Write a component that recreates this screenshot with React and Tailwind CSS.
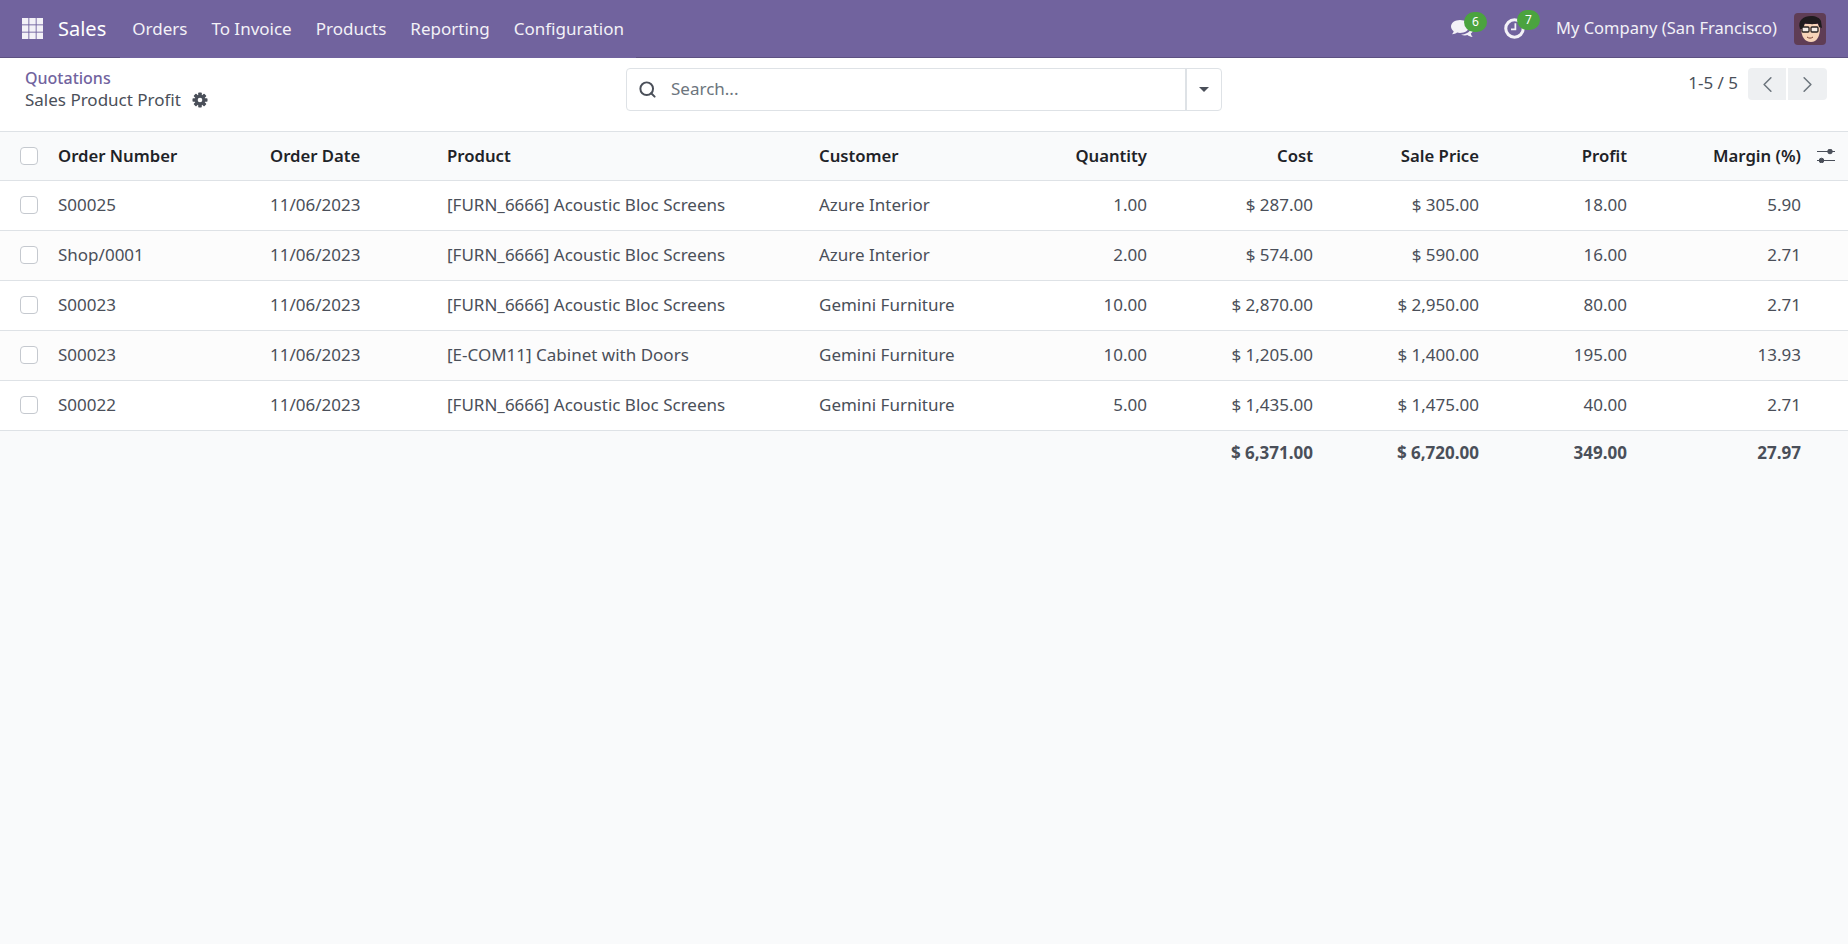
import React from 'react';
import { Search, ChevronLeft, ChevronRight } from 'lucide-react';

const menus = ['Orders', 'To Invoice', 'Products', 'Reporting', 'Configuration'];

const rows = [
  ['S00025', '11/06/2023', '[FURN_6666] Acoustic Bloc Screens', 'Azure Interior', '1.00', '$ 287.00', '$ 305.00', '18.00', '5.90'],
  ['Shop/0001', '11/06/2023', '[FURN_6666] Acoustic Bloc Screens', 'Azure Interior', '2.00', '$ 574.00', '$ 590.00', '16.00', '2.71'],
  ['S00023', '11/06/2023', '[FURN_6666] Acoustic Bloc Screens', 'Gemini Furniture', '10.00', '$ 2,870.00', '$ 2,950.00', '80.00', '2.71'],
  ['S00023', '11/06/2023', '[E-COM11] Cabinet with Doors', 'Gemini Furniture', '10.00', '$ 1,205.00', '$ 1,400.00', '195.00', '13.93'],
  ['S00022', '11/06/2023', '[FURN_6666] Acoustic Bloc Screens', 'Gemini Furniture', '5.00', '$ 1,435.00', '$ 1,475.00', '40.00', '2.71'],
];

function Box() {
  return <span className="block h-[18px] w-[18px] rounded-[4px] border border-[#c5c9cf] bg-white" />;
}

function Avatar() {
  return (
    <svg viewBox="0 0 32 32" className="h-8 w-8 rounded-[4px]">
      <rect width="32" height="32" fill="#5f3d55" />
      <path d="M7 14c0 10 4 15 10 15s9-6 9-14l-2-4H10z" fill="#f6d3b8" />
      <path d="M6 16C3 7 10 3 17 3c5 0 9 2 10 5l1 7-3-1-1-4c-4 2-10 1-13 0l-2 6z" fill="#1f1b1e" />
      <rect x="8" y="14" width="7" height="5" rx="1" fill="#f3ece6" stroke="#26201f" strokeWidth="1.3" />
      <rect x="17" y="14" width="7" height="5" rx="1" fill="#f3ece6" stroke="#26201f" strokeWidth="1.3" />
      <path d="M13 24c2 1.500 4 1.500 6 0" stroke="#7a4335" strokeWidth="1" fill="none" />
    </svg>
  );
}

function Gear() {
  return (
    <svg viewBox="0 0 16 16" className="h-4 w-4">
      {[0, 45, 90, 135].map((a) => (
        <rect key={a} x="6.200" y="0.500" width="3.600" height="15" rx="0.800" fill="#4a4f59" transform={`rotate(${a} 8 8)`} />
      ))}
      <circle cx="8" cy="8" r="5.200" fill="#4a4f59" />
      <circle cx="8" cy="8" r="2.300" fill="#ffffff" />
    </svg>
  );
}

function Navbar() {
  return (
    <div className="relative flex h-[58px] items-center bg-[#71639e] text-white border-b border-[#5d5182]">
      <span className="absolute -bottom-px left-[120px] h-px w-[516px] bg-[#71639e]" />
      <svg viewBox="0 0 21 21" className="ml-[22px] h-[21px] w-[21px]" fill="#f3f1f7">
        {[0, 7.300, 14.600].map((y) =>
          [0, 7.300, 14.600].map((x) => <rect key={`${x}-${y}`} x={x} y={y} width="6.400" height="6.400" />)
        )}
      </svg>
      <span className="ml-[15px] text-[20px]">Sales</span>
      <div className="ml-[26px] flex gap-[24px] text-[17px] text-[#f3f1f7]">
        {menus.map((m) => (
          <span key={m}>{m}</span>
        ))}
      </div>
      <div className="ml-auto flex items-center">
        <span className="relative mr-[31px] flex">
          <svg viewBox="0 0 22 18" className="h-[18px] w-[22px]" fill="#f3f1f7">
            <path d="M9 0c5 0 9 2.800 9 6.500S14 13 9 13c-1 0-2-.1-2.900-.4C4.800 13.600 3 14.300 1 14.300c1-1 1.500-2 1.700-3C1 10 0 8.400 0 6.500 0 2.800 4 0 9 0z" />
            <path d="M19.500 5.500C21 6.700 22 8 22 9.700c0 1.500-.8 2.900-2.200 3.900.2 1 .8 2.400 1.800 3.400-2 0-3.900-.8-5.200-1.900-.8.2-1.500.3-2.400.3-1.500 0-2.900-.3-4-.9 5.500-.1 10-2.900 10-7.300 0-.6-.2-1.200-.5-1.700z" />
          </svg>
          <span className="absolute -right-[14px] -top-[8px] flex h-[20px] w-[23px] items-center justify-center rounded-full bg-[#4ba33f] text-[12px]">6</span>
        </span>
        <span className="relative mr-[31px] flex">
          <svg viewBox="0 0 24 24" className="h-[21px] w-[21px]" fill="none" stroke="#f3f1f7" strokeWidth="3.500">
            <circle cx="12" cy="12" r="10" />
            <path d="M13 6v7H8" strokeWidth="2" />
          </svg>
          <span className="absolute -right-[15px] -top-[8px] flex h-[20px] w-[23px] items-center justify-center rounded-full bg-[#4ba33f] text-[12px]">7</span>
        </span>
        <span className="text-[16.500px] text-[#f3f1f7]">My Company (San Francisco)</span>
        <span className="ml-[17px] mr-[22px] flex"><Avatar /></span>
      </div>
    </div>
  );
}

function ControlPanel() {
  return (
    <div className="relative flex h-[74px] items-start bg-white border-b border-[#dee2e6] text-[17px] text-[#4a4f59]">
      <div className="ml-[25px] mt-[9px] w-[601px] leading-[22px]">
        <div className="text-[16px] font-medium text-[#71639e]">Quotations</div>
        <div className="flex items-center gap-[11px]">
          Sales Product Profit
          <Gear />
        </div>
      </div>
      <div className="mt-[10px] flex h-[43px] w-[596px] items-center rounded-[4px] border border-[#dee2e6]">
        <Search size={19} strokeWidth={2.5} className="ml-[11px]" />
        <span className="-mt-[2px] ml-[14px] flex-1 text-[#6c757d]">Search...</span>
        <span className="flex h-full w-[36px] items-center justify-center border-l-2 border-[#dee2e6]">
          <span className="h-0 w-0 border-x-[5px] border-t-[5px] border-x-transparent border-t-[#4a4f59]" />
        </span>
      </div>
      <div className="ml-auto mr-[21px] mt-[10px] flex items-center">
        <span className="-mt-[2px] mr-[10px]">1-5 / 5</span>
        <span className="flex h-[32px] w-[38px] items-center justify-center rounded-l-[4px] bg-[#eef0f2] text-[#6c757d]"><ChevronLeft size={27} strokeWidth={1.4} /></span>
        <span className="ml-[2px] flex h-[32px] w-[39px] items-center justify-center rounded-r-[4px] bg-[#eef0f2] text-[#6c757d]"><ChevronRight size={27} strokeWidth={1.4} /></span>
      </div>
    </div>
  );
}

function ListTable() {
  return (
    <table className="w-full table-fixed border-collapse text-[17px] text-[#4a4f59]">
      <colgroup>
        <col className="w-[50px]" />
        <col className="w-[212px]" />
        <col className="w-[177px]" />
        <col className="w-[372px]" />
        <col className="w-[189px]" />
        <col className="w-[155px]" />
        <col className="w-[166px]" />
        <col className="w-[166px]" />
        <col className="w-[148px]" />
        <col className="w-[174px]" />
        <col className="w-[39px]" />
      </colgroup>
      <thead>
        <tr className="h-[48px] border-b border-[#dee2e6] bg-[#f9fafb] text-[16.700px] text-[#1f2328]">
          <th className="pl-[20px]"><Box /></th>
          <th className="px-2 text-left font-semibold">Order Number</th>
          <th className="px-2 text-left font-semibold">Order Date</th>
          <th className="px-2 text-left font-semibold">Product</th>
          <th className="px-2 text-left font-semibold">Customer</th>
          <th className="px-2 text-right font-semibold">Quantity</th>
          <th className="px-2 text-right font-semibold">Cost</th>
          <th className="px-2 text-right font-semibold">Sale Price</th>
          <th className="px-2 text-right font-semibold">Profit</th>
          <th className="px-2 text-right font-semibold">Margin (%)</th>
          <th>
            <svg viewBox="0 0 18 14" className="ml-[8px] h-[14px] w-[18px]" stroke="#4a4f59" fill="#4a4f59">
              <path d="M0 2.500h18M0 11.500h18" strokeWidth="1.200" />
              <circle cx="13" cy="2.500" r="2.300" />
              <circle cx="4.500" cy="11.500" r="2.300" />
            </svg>
          </th>
        </tr>
      </thead>
      <tbody>
        {rows.map((r, i) => (
          <tr key={i} className={`h-[50px] border-b border-[#dee2e6] ${i % 2 ? 'bg-[#fcfcfc]' : 'bg-white'}`}>
            <td className="pl-[20px]"><Box /></td>
            {r.map((v, j) => (
              <td key={j} className={`px-2 ${j > 3 ? 'text-right' : 'text-left'}`}>{v}</td>
            ))}
            <td />
          </tr>
        ))}
      </tbody>
      <tfoot>
        <tr className="h-[45px] font-bold">
          <td colSpan={6} />
          <td className="px-2 text-right">$ 6,371.00</td>
          <td className="px-2 text-right">$ 6,720.00</td>
          <td className="px-2 text-right">349.00</td>
          <td className="px-2 text-right">27.97</td>
          <td />
        </tr>
      </tfoot>
    </table>
  );
}

export default function App() {
  return (
    <div className="h-[944px] overflow-hidden bg-[#f9fafb] font-['Noto_Sans',sans-serif]">
      <Navbar />
      <ControlPanel />
      <ListTable />
    </div>
  );
}
